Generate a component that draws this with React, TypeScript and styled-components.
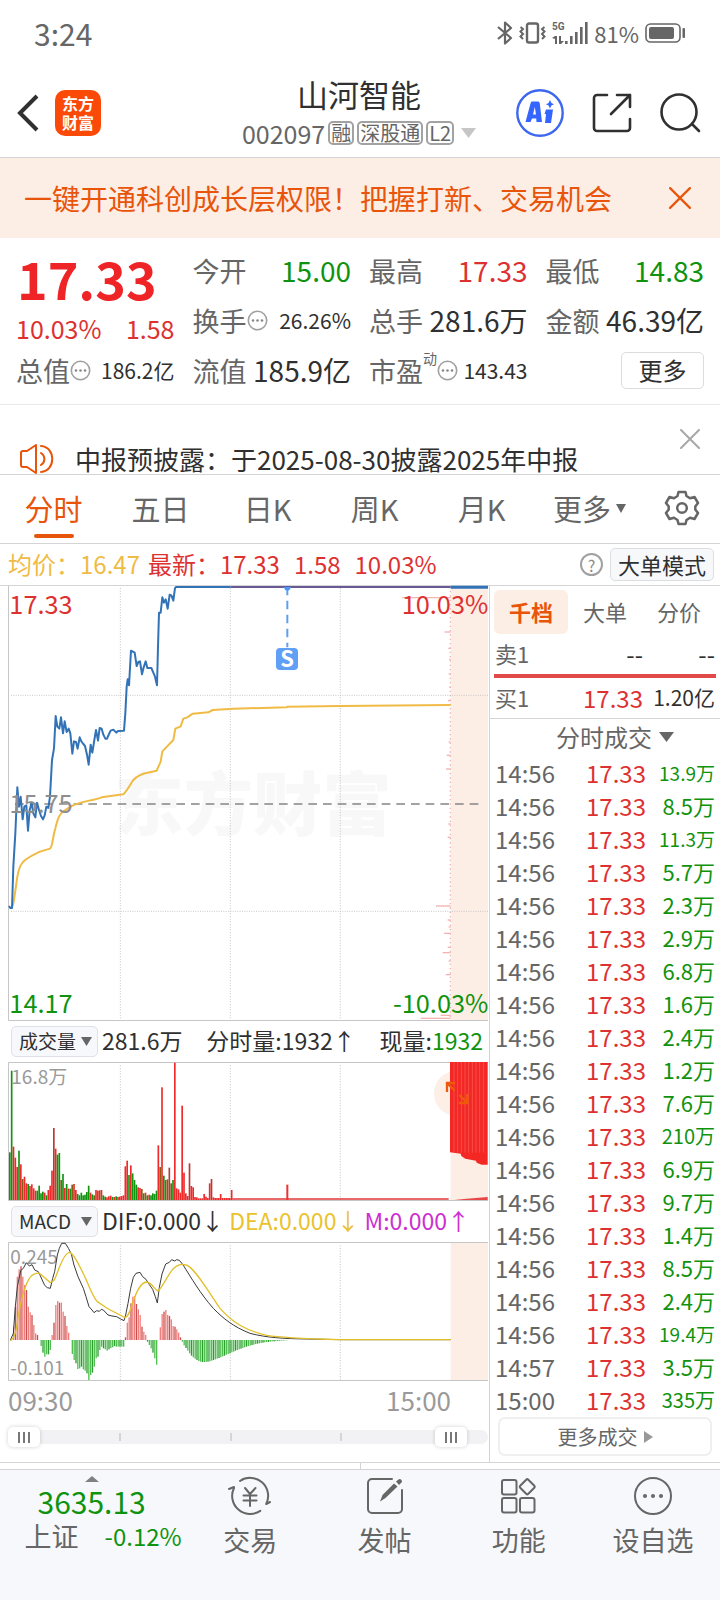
import React, { useState } from "react";
import styled, { createGlobalStyle } from "styled-components";

const c = {
  red: "#dd3131",
  green: "#0f930f",
  orange: "#e8550a",
  peach: "#fcede5",
  text: "#303030",
  sub: "#666666",
  mute: "#9a9a9a",
  line: "#d4d4d6",
  nav: "#f7f8fb",
  blue: "#3273b8",
  gold: "#f0bb45",
};

const Global = createGlobalStyle`
  * { box-sizing: border-box; }
  body { margin: 0; background: #fff; }
  body, button, select, input {
    font-family: "Noto Sans CJK SC", "Noto Sans", sans-serif;
    color: ${c.text};
  }
  button { border: 0; padding: 0; background: none; cursor: pointer; }
  h1, p, dl, dt, dd { margin: 0; font-weight: 400; }
  svg { display: block; flex: none; }
`;

const Page = styled.div`
  display: flex;
  flex-direction: column;
  min-height: 100vh;
  overflow: hidden;
`;

/* ---------- status bar and title ---------- */

const StatusBar = styled.div`
  display: flex;
  align-items: center;
  justify-content: space-between;
  height: 70px;
  padding: 0 34px 4px;
  color: ${c.sub};
  font-size: 30px;
`;

const StatusIcons = styled.div`
  display: flex;
  align-items: center;
  gap: 6px;
  font-size: 22px;
`;

const Header = styled.header`
  display: grid;
  grid-template-columns: 1fr auto 1fr;
  height: 88px;
  padding: 0 19px 0 17px;
  border-bottom: 1px solid ${c.line};
`;

const HeaderSide = styled.div<{ $end?: boolean }>`
  display: flex;
  align-items: center;
  gap: ${(p) => (p.$end ? 28 : 14)}px;
  padding-bottom: 2px;
  justify-content: ${(p) => (p.$end ? "flex-end" : "flex-start")};
`;

const Logo = styled.span`
  display: grid;
  place-content: center;
  width: 46px;
  height: 46px;
  border-radius: 10px;
  background: #fb4a08;
  color: #fff;
  font-size: 16px;
  font-weight: 700;
  line-height: 19px;
`;

const TitleBlock = styled.div`
  display: flex;
  flex-direction: column;
  align-items: center;
`;

const Title = styled.h1`
  font-size: 31px;
  line-height: 48px;
`;

const CodeLine = styled.div`
  display: flex;
  align-items: center;
  gap: 3px;
  color: ${c.sub};
  font-size: 25px;
  line-height: 30px;
  svg {
    margin-left: 4px;
  }
`;

const Tag = styled.span`
  padding: 0 1px;
  border: 2px solid #a2a2a2;
  border-radius: 5px;
  font-size: 20px;
  line-height: 20px;
`;

/* ---------- banner ---------- */

const Banner = styled.div`
  display: flex;
  align-items: center;
  justify-content: space-between;
  height: 80px;
  padding: 0 29px 0 24px;
  background: ${c.peach};
  color: ${c.orange};
  font-size: 28px;
`;

/* ---------- quote ---------- */

const Quote = styled.section`
  display: grid;
  grid-template-columns: repeat(4, minmax(0, 1fr));
  grid-auto-rows: 50px;
  column-gap: 18px;
  padding: 7px 16px 9px;
  border-bottom: 1px solid #e9e9eb;
`;

const PriceCell = styled.div`
  grid-row: span 2;
  color: ${c.red};
`;

const BigPrice = styled.div`
  padding-left: 1px;
  color: #ee2426;
  font-size: 52px;
  font-weight: 700;
  line-height: 66px;
`;

const Change = styled.div`
  display: flex;
  justify-content: space-between;
  font-size: 25px;
  line-height: 34px;
`;

const Stat = styled.dl`
  display: flex;
  align-items: center;
  justify-content: space-between;
  white-space: nowrap;
`;

const StatName = styled.dt`
  display: flex;
  align-items: center;
  color: ${c.sub};
  font-size: 27px;
`;

const Super = styled.sup`
  align-self: flex-start;
  font-size: 14px;
  line-height: 14px;
`;

const StatValue = styled.dd<{ $small?: boolean; $color?: string }>`
  font-size: ${(p) => (p.$small ? 21 : 28)}px;
  color: ${(p) => p.$color || c.text};
`;

const MoreButton = styled.button`
  place-self: center end;
  width: 83px;
  height: 37px;
  border: 1px solid #dcdcde;
  border-radius: 5px;
  font-size: 24px;
  line-height: 34px;
`;

/* ---------- notice ---------- */

const Notice = styled.div`
  display: flex;
  align-items: flex-start;
  justify-content: space-between;
  height: 70px;
  padding: 24px 20px 0;
  overflow: hidden;
  border-bottom: 1px solid ${c.line};
`;

const NoticeText = styled.p`
  display: flex;
  align-items: center;
  gap: 21px;
  padding-top: 12px;
  font-size: 26px;
  line-height: 36px;
`;

/* ---------- period tabs ---------- */

const Tabs = styled.nav`
  display: grid;
  grid-template-columns: repeat(5, 107fr) 109fr 76fr;
  height: 69px;
  border-bottom: 1px solid ${c.line};
`;

const Tab = styled.button<{ $active?: boolean }>`
  position: relative;
  display: flex;
  align-items: center;
  justify-content: center;
  gap: 5px;
  padding-bottom: 2px;
  white-space: nowrap;
  color: ${(p) => (p.$active ? c.orange : c.sub)};
  font-size: 29px;
  &::after {
    content: "";
    position: absolute;
    bottom: 5px;
    width: 40px;
    height: 4px;
    border-radius: 2px;
    background: ${(p) => (p.$active ? c.orange : "transparent")};
  }
`;

const InfoRow = styled.div`
  display: flex;
  align-items: center;
  justify-content: space-between;
  height: 42px;
  padding: 0 6px 0 8px;
  border-bottom: 1px solid ${c.line};
  color: ${c.red};
  font-size: 24px;
`;

const InfoValues = styled.div`
  display: flex;
  gap: 14px;
  padding-bottom: 2px;
`;

const Average = styled.span`
  margin-right: -6px;
  color: ${c.gold};
`;

const InfoActions = styled.div`
  display: flex;
  align-items: center;
  gap: 7px;
`;

const HelpButton = styled.button`
  width: 23px;
  height: 23px;
  border: 2px solid #a0a0a0;
  border-radius: 50%;
  color: #8a8a8a;
  font-size: 16px;
  line-height: 18px;
`;

const ModeButton = styled.button`
  height: 33px;
  padding: 0 7px;
  border: 1px solid #dddee2;
  border-radius: 5px;
  background: #f7f8fa;
  font-size: 22px;
  line-height: 29px;
`;

/* ---------- charts ---------- */

const Main = styled.main`
  display: grid;
  grid-template-columns: minmax(0, 490fr) minmax(0, 230fr);
  border-bottom: 1px solid ${c.line};
`;

const ChartColumn = styled.div`
  padding: 0 1px 0 8px;
  border-right: 1px solid ${c.line};
`;

const ChartSvg = styled.svg`
  width: 100%;
  height: auto;
  overflow: visible;
  font-family: "Noto Sans CJK SC", sans-serif;
`;

const IndicatorRow = styled.div`
  display: flex;
  align-items: center;
  gap: 4px;
  height: 41px;
  padding-left: 3px;
  font-size: 23px;
  white-space: nowrap;
`;

const Readings = styled.div<{ $end: number }>`
  flex: 1;
  display: flex;
  justify-content: space-between;
  padding: 0 ${(p) => p.$end}px 4px 0;
`;

const Picker = styled.label`
  position: relative;
  display: flex;
  align-items: center;
  select {
    appearance: none;
    width: 87px;
    height: 31px;
    padding: 0 0 3px 7px;
    border: 1px solid #e0e1e6;
    border-radius: 5px;
    background: ${c.nav};
    font-size: 19px;
  }
  svg {
    position: absolute;
    right: 6px;
    pointer-events: none;
  }
`;

const Tint = styled.span<{ $color: string }>`
  color: ${(p) => p.$color};
`;

const TimeAxis = styled.div`
  display: flex;
  justify-content: space-between;
  padding: 0 37px 2px 0;
  color: ${c.mute};
  font-size: 26px;
  line-height: 38px;
`;

const RangeBar = styled.div`
  position: relative;
  height: 20px;
  margin: 6px 0 15px;
  &::before {
    content: "";
    position: absolute;
    inset: 3px 0;
    border-radius: 7px;
    background:
      linear-gradient(#d5d5d9, #d5d5d9) 23.3% 50% / 2px 8px no-repeat,
      linear-gradient(#d5d5d9, #d5d5d9) 46.4% 50% / 2px 8px no-repeat,
      linear-gradient(#d5d5d9, #d5d5d9) 69.4% 50% / 2px 8px no-repeat,
      #f2f2f5;
  }
`;

const RangeThumb = styled.input`
  position: absolute;
  inset: 0;
  width: 100%;
  height: 20px;
  margin: 0;
  appearance: none;
  background: none;
  pointer-events: none;
  &::-webkit-slider-thumb {
    appearance: none;
    width: 32px;
    height: 20px;
    border-radius: 5px;
    pointer-events: auto;
    box-shadow: 0 0 4px rgba(0, 0, 0, 0.18);
    background:
      linear-gradient(#777, #777) 10px 50% / 2px 11px no-repeat,
      linear-gradient(#777, #777) 15px 50% / 2px 11px no-repeat,
      linear-gradient(#777, #777) 20px 50% / 2px 11px no-repeat,
      #fff;
  }
`;

/* ---------- order book ---------- */

const Book = styled.aside`
  display: flex;
  flex-direction: column;
  padding-top: 4px;
`;

const BookTabs = styled.div`
  display: grid;
  grid-template-columns: repeat(3, 1fr);
  padding: 0 4px;
`;

const BookTab = styled.button<{ $active?: boolean }>`
  height: 44px;
  padding-bottom: 2px;
  border-radius: 6px;
  background: ${(p) => (p.$active ? c.peach : "none")};
  color: ${(p) => (p.$active ? c.orange : c.sub)};
  font-size: 22px;
  font-weight: ${(p) => (p.$active ? 700 : 400)};
`;

const Level = styled.div`
  display: grid;
  grid-template-columns: 1fr 80px 72px;
  align-items: center;
  height: 40px;
  padding: 0 5px 2px;
  text-align: right;
  font-size: 21px;
`;

const LevelName = styled.span`
  text-align: left;
  color: ${c.sub};
  font-size: 22px;
`;

const LevelPrice = styled.span<{ $color?: string }>`
  color: ${(p) => p.$color || c.text};
  font-size: 24px;
`;

const Balance = styled.div`
  height: 4px;
  margin: 0 4px;
  background: #e24a4a;
`;

const TradesHead = styled.button`
  display: flex;
  align-items: center;
  justify-content: center;
  gap: 7px;
  height: 39px;
  padding: 0 0 3px 20px;
  border-top: 1px solid ${c.line};
  color: ${c.sub};
  font-size: 24px;
`;

const Trades = styled.table`
  width: 100%;
  border-collapse: collapse;
  td {
    height: 33px;
    padding: 0;
    line-height: 31px;
    vertical-align: top;
  }
`;

const TimeCell = styled.td`
  && {
    padding-left: 5px;
  }
  color: ${c.sub};
  font-size: 24px;
`;

const PriceTd = styled.td`
  color: ${c.red};
  font-size: 24px;
  text-align: right;
`;

const VolumeTd = styled.td<{ $size: number }>`
  && {
    padding-right: 5px;
  }
  width: 74px;
  color: ${c.green};
  font-size: ${(p) => p.$size}px;
  text-align: right;
`;

const MoreTrades = styled.button`
  display: flex;
  align-items: center;
  justify-content: center;
  gap: 6px;
  height: 39px;
  margin: 0 8px 6px;
  border: 2px solid #efeff1;
  border-radius: 7px;
  color: ${c.sub};
  font-size: 20px;
`;

/* ---------- bottom bar ---------- */

const Peek = styled.div`
  display: grid;
  grid-template-columns: 1fr 1fr;
  height: 6px;
  span + span {
    border-left: 1px solid ${c.line};
  }
`;

const BottomBar = styled.footer`
  flex: 1;
  display: grid;
  grid-template-columns: 183fr repeat(4, 134fr);
  align-items: start;
  min-height: 131px;
  border-top: 1px solid ${c.line};
  background: ${c.nav};
`;

const IndexButton = styled.button`
  display: flex;
  flex-direction: column;
  align-items: center;
  padding-top: 6px;
  color: ${c.green};
  font-size: 30px;
  line-height: 38px;
`;

const IndexLine = styled.span`
  display: flex;
  align-items: center;
  gap: 26px;
  padding-left: 23px;
  font-size: 24px;
  line-height: 32px;
`;

const IndexName = styled.span`
  color: ${c.sub};
  font-size: 27px;
`;

const NavButton = styled.button`
  display: flex;
  flex-direction: column;
  align-items: center;
  gap: 4px;
  padding-top: 6px;
  color: ${c.sub};
  font-size: 27px;
  line-height: 40px;
`;

/* ---------- small drawings ---------- */

const Triangle = ({ w = 12, h = 10, fill = c.sub }: { w?: number; h?: number; fill?: string }) => (
  <svg width={w} height={h} viewBox="0 0 12 10" preserveAspectRatio="none">
    <path d="M0 0H12L6 10Z" fill={fill} />
  </svg>
);

const Cross = ({ size, color }: { size: number; color: string }) => (
  <svg width={size} height={size} viewBox="0 0 20 20" fill="none" stroke={color} strokeWidth="2" strokeLinecap="round">
    <path d="M1 1 19 19M19 1 1 19" />
  </svg>
);

const Dots = () => (
  <svg width="21" height="21" viewBox="0 0 21 21">
    <circle cx="10.5" cy="10.5" r="9.2" fill="none" stroke="#a0a0a0" strokeWidth="1.6" />
    <circle cx="6" cy="10.5" r="1.3" fill="#888" />
    <circle cx="10.5" cy="10.5" r="1.3" fill="#888" />
    <circle cx="15" cy="10.5" r="1.3" fill="#888" />
  </svg>
);

const Bluetooth = () => (
  <svg width="16" height="24" viewBox="0 0 16 24" fill="none" stroke={c.sub} strokeWidth="2.2" strokeLinejoin="round">
    <path d="M1 6 14 17 8 22.500V1.500L14 7 1 18" />
  </svg>
);

const Vibrate = () => (
  <svg width="27" height="22" viewBox="0 0 27 22" fill="none" stroke={c.sub} strokeWidth="2.4">
    <rect x="8" y="1.500" width="11" height="19" rx="2" />
    <path d="M1.500 5 4 7 1.500 9.500 4 12 1.500 14.500 4 17M25.500 5 23 7 25.500 9.500 23 12 25.500 14.500 23 17" strokeWidth="2" />
  </svg>
);

const Signal = () => (
  <svg width="36" height="24" viewBox="0 0 36 24" fill={c.sub}>
    <text x="0" y="9" fontSize="10" fontWeight="700" fontFamily="Roboto, sans-serif">5G</text>
    <path d="M3 15h2v8H3zM0 17l3-2v3zM7 15h2v8H7zM9 23l3-3H9z" />
    <rect x="13" y="20" width="2.600" height="3" />
    <rect x="18" y="15" width="2.600" height="8" />
    <rect x="23" y="11" width="2.600" height="12" />
    <rect x="28" y="6" width="2.600" height="17" />
    <rect x="33" y="1" width="2.600" height="22" />
  </svg>
);

const Battery = () => (
  <svg width="41" height="20" viewBox="0 0 41 20">
    <rect x="1" y="1" width="34" height="18" rx="4.500" fill="none" stroke={c.sub} strokeWidth="1.600" />
    <rect x="4" y="4" width="25" height="12" rx="2" fill={c.sub} />
    <rect x="37.500" y="5" width="2.500" height="10" rx="1" fill={c.sub} />
  </svg>
);

const AiIcon = () => (
  <svg width="48" height="48" viewBox="0 0 48 48">
    <circle cx="24" cy="24" r="22.700" fill="none" stroke="#3d67ee" strokeWidth="2.400" />
    <path d="M16 12.500H22Q23.500 12.500 23.700 14L26 33H20.500L20.200 29.500H16L14.500 33H9.500L14.500 14.500Q15 12.500 16 12.500ZM18.800 18 17 25.500H20Z" fill="#3466ff" fillRule="evenodd" />
    <path d="M30 20.500H37L35 34H29L30 25H28.500ZM34 11l1.400 3L38 15.200 35.400 16.500 34 19.500 32.600 16.500 30 15.200 32.600 14z" fill="#3466ff" />
  </svg>
);

const Share = () => (
  <svg width="40" height="40" viewBox="0 0 40 40" fill="none" stroke="#303030" strokeWidth="2.600" strokeLinecap="round" strokeLinejoin="round">
    <path d="M15 2H5a3 3 0 0 0-3 3V35a3 3 0 0 0 3 3H35a3 3 0 0 0 3-3V26M25 2H38V14M38 2 19 21" />
  </svg>
);

const Search = () => (
  <svg width="41" height="40" viewBox="0 0 41 40" fill="none" stroke="#303030" strokeWidth="2.600" strokeLinecap="round">
    <circle cx="19" cy="19" r="17.500" />
    <path d="M32 31 39 38" />
  </svg>
);

const Speaker = () => (
  <svg width="34" height="30" viewBox="0 0 34 30" fill="none" stroke={c.orange} strokeWidth="2" strokeLinejoin="round" strokeLinecap="round">
    <path d="M16 1 7 7H3a2 2 0 0 0-2 2V21a2 2 0 0 0 2 2H7L16 29ZM21 9a7 7 0 0 1 0 12M21 2c15 1 15 25 0 26" />
  </svg>
);

const Gear = () => (
  <svg width="36" height="36" viewBox="0 0 36 36" fill="none" stroke={c.sub} strokeWidth="2.500" strokeLinejoin="round">
    <path d="M14.500 2H21.500L22.500 6 26 8.300 30.500 7 34 13 31.300 16.500V19.500L34 23 30.500 29 26 27.700 22.500 30 21.500 34H14.500L13.500 30 10 27.700 5.500 29 2 23 4.700 19.500V16.500L2 13 5.500 7 10 8.300 13.500 6Z" />
    <circle cx="18" cy="18" r="4.800" />
  </svg>
);

const navIconProps = { height: 40, viewBox: "0 0 44 40", width: 44, fill: "none", stroke: c.sub, strokeWidth: 2, strokeLinecap: "round" as const, strokeLinejoin: "round" as const };

const navItems = [
  {
    name: "交易",
    icon: (
      <svg {...navIconProps}>
        <path d="M12 5A18 18 0 0 1 38.200 28L42 26M32.300 34.800A18 18 0 0 1 6 12M1 13 6 11" />
        <path d="M17 12 22 18 27.500 12M15.500 19.500H28.500M15.500 24.500H28.500M22 18V30" />
      </svg>
    ),
  },
  {
    name: "发帖",
    icon: (
      <svg {...navIconProps}>
        <path d="M29 3H9a4 4 0 0 0-4 4V33a4 4 0 0 0 4 4H35a4 4 0 0 0 4-4V14" />
        <path d="M17 25.500 19.500 19 31 7.500 34.500 10.500 22.500 22Z" fill={c.sub} stroke="none" />
        <path d="M33 5.500 35.500 3.500Q37 2.500 38.500 4 39.500 5.500 38.500 6.500L36 9Z" fill={c.sub} stroke="none" />
      </svg>
    ),
  },
  {
    name: "功能",
    icon: (
      <svg {...navIconProps}>
        <rect x="5" y="4" width="14.500" height="14.500" rx="2" />
        <rect x="5" y="22" width="14.500" height="14.500" rx="2" />
        <rect x="23" y="22" width="14.500" height="14.500" rx="2" />
        <rect x="24.500" y="5" width="11.500" height="11.500" rx="1.500" transform="rotate(45 30.250 10.750)" />
      </svg>
    ),
  },
  {
    name: "设自选",
    icon: (
      <svg {...navIconProps}>
        <circle cx="22" cy="20" r="18" />
        <g fill={c.sub} stroke="none">
          <circle cx="14" cy="20" r="2" />
          <circle cx="22" cy="20" r="2" />
          <circle cx="30" cy="20" r="2" />
        </g>
      </svg>
    ),
  },
];

/* ---------- chart data: three drawing units to a pixel ---------- */

const gridX = [361, 691, 1021];
const STEP = 5.5;
const FIRST = 30;

const GridLines = ({ top, bottom }: { top: number; bottom: number }) => (
  <g stroke="#c2c2c2" strokeWidth="3" strokeDasharray="3 5">
    {gridX.map((x) => (
      <path key={x} d={`M${x} ${top}V${bottom}`} />
    ))}
  </g>
);

const priceLine =
  "27,978 31,984 36,984 40,860 46,760 52,622 57,680 62,650 68,718 73,680 79,676 84,752 89,690 95,668 100,700 106,712 111,668 117,690 123,708 129,718 134,706 139,680 145,684 150,650 156,540 162,505 167,408 172,440 178,446 183,412 189,460 194,424 200,456 206,446 211,460 217,521 222,484 228,486 233,506 239,472 244,484 250,492 255,498 261,524 266,554 272,494 277,518 283,480 288,450 294,482 299,444 305,446 310,464 316,476 321,476 327,462 332,452 340,449 349,458 354,453 372,452 376,400 380,320 383,298 387,316 393,212 404,218 410,258 415,246 420,244 426,283 431,262 437,244 442,264 454,264 460,278 465,290 471,316 474,200 477,98 482,98 487,52 492,68 497,58 503,86 509,44 514,46 520,62 525,24 530,21";

const averageLine =
  "M38 978 42 960 52 890C58 860 62 852 75 840 95 826 105 822 120 815L150 806C158 800 158 770 166 745 174 712 178 704 190 694L212 680C235 665 280 662 305 652L370 643C380 634 390 615 400 600 415 584 430 580 442 578L470 572 482 545 487 514 520 480 526 446 542 439 550 416 562 412 578 401 625 397 638 390 700 386 860 382 862 380 1020 378 1352 375";

const sideTicks: [number, number][] = [
  [53, 145], [156, 18], [205, 7], [238, 5], [282, 6], [322, 4], [362, 8], [486, 6], [526, 12], [567, 14], [732, 7], [772, 9],
  [978, 44], [1020, 9], [1041, 6], [1060, 20], [1102, 9], [1118, 24], [1143, 6], [1184, 15], [1306, 30], [1315, 90],
];

/* the letter after each height: r rising, g falling, d and m mixed minutes */
const volumeData =
  "143g 388g 160r 127r 99r 148g 107r 63d 70r 50r 48g 42r 47r 35r 28r 28g 43g 20g 25g 22r 14g 30r 43r 88r 216m 154r 136g 141g 60d 78g 36r 48g 34r 34g 46d 48r 30r 18g 14g 22g 14g 16g 24g 43g 22r 17g 14d 30r 28r 29d 30r 14g 10g 8r 11r 13r 9g 9r 11g 9r 10r 12r 14r 101r 118r 75g 104r 80g 60g 46g 38r 36r 33d 20g 22r 14g 16r 14g 20g 18g 28g 164r 99d 338r 73g 60d 62d 97m 50d 60g 412r 35r 32r 22r 283r 82r 20r 12r 110m 42r 38r 9r 8r 5r 5r 5r 18r 10r 6r 50r 63m 8r 6r 6r 6r 18r 6r 6r 6r 6r 6r 30r".split(" ");
const volumeColors: Record<string, string> = { r: "#ee2a2a", g: "#109410", d: "#8a5a18", m: "#b83a36" };

const macdHead =
  "0 0 40 100 190 212 221 190 165 150 100 83 75 45 20 15 0 -18 -38 -50 -43 -43 -30 15 52 105 117 112 112 85 72 42 22 0 -42 -60 -70 -87 -85 -80 -88 -92 -100 -120 -105 -98 -80 -55 -50 -30 -20 -25 -28 -32 -28 -24 -22 -18 -20 -20 -20 -20 -20 8 52 68 110 130 132 108 92 75 40 25 15 -5 -15 -25 -38 -55 -74 0 38 78 85 90 75 72 62 42 40 32 22 8 -5 -16 -24 -32 -40 -47 -52 -56 -60 -63 -65 -66 -66 -66 -65 -64 -62 -60 -58 -56 -54 -52 -49 -47 -44 -42 -40 -37 -35 -32 -30 -28 -26 -24 -22 -20 -18 -17 -15 -14 -12 -11 -10 -9 -8 -7 -6 -6 -5 -4 -4 -3 -3 -2 -2 -2 -1 -1"
    .split(" ")
    .map(Number);

const PriceChart = () => (
  <ChartSvg viewBox="24 18 1440 1305" role="img" aria-label="分时走势">
    <g fill="#f8f8f8" fontSize="208" fontWeight="900">
      <text x="343" y="750">东方财富</text>
    </g>
    <rect x="1352" y="18" width="112" height="1303" fill={c.peach} />
    <path d="M25.500 18V1321.500H1464" fill="none" stroke="#c6c6c8" strokeWidth="3" />
    <GridLines top={24} bottom={1318} />
    <path d="M33 346H1464M33 994H1464" stroke="#c8c8c8" strokeWidth="3" strokeDasharray="3 4" />
    <g stroke="#f2b3b1" strokeWidth="4">
      {sideTicks.map(([y, w]) => (
        <path key={y} d={`M${1352 - w} ${y}H1352`} />
      ))}
      <path d="M1351 20V1318" strokeDasharray="4 9" />
    </g>
    <g fontSize="76">
      <text x="28" y="101" fill={c.red}>17.33</text>
      <text x="1465" y="101" fill={c.red} textAnchor="end">10.03%</text>
      <text x="28" y="1298" fill={c.green}>14.17</text>
      <text x="1465" y="1298" fill={c.green} textAnchor="end">-10.03%</text>
    </g>
    <path d="M45 672H1440" stroke="#858585" strokeWidth="5" strokeDasharray="26 18" />
    <path d={averageLine} fill="none" stroke={c.gold} strokeWidth="6" strokeLinejoin="round" />
    <polyline points={priceLine} fill="none" stroke={c.blue} strokeWidth="6" strokeLinejoin="round" />
    <text x="28" y="698" fill="#8e8e8e" fontSize="76">15.75</text>
    <path d="M526 21H692" stroke={c.blue} strokeWidth="6" />
    <path d="M692 21H1352" stroke="#6a5a94" strokeWidth="6" />
    <path d="M1352 22H1464" stroke={c.blue} strokeWidth="9" />
    <path d="M850 21H874L868 30 862 34 856 30Z" fill="#4c94f7" />
    <path d="M862 32V202" stroke="#5f9ff0" strokeWidth="6" strokeDasharray="26 16" strokeDashoffset="12" />
    <rect x="828" y="204" width="66" height="66" rx="12" fill="#5f9ff5" />
    <text x="861" y="261" fill="#fff" fontSize="66" fontWeight="700" textAnchor="middle">S</text>
  </ChartSvg>
);

const VolumeChart = () => (
  <ChartSvg viewBox="24 156 1440 417" role="img" aria-label="成交量">
    <GridLines top={166} bottom={570} />
    <rect x="1352" y="158" width="112" height="412" fill={c.peach} />
    <path d="M1464 157.500H25.500V571.500H1464" fill="none" stroke="#c6c6c8" strokeWidth="3" />
    <text x="34" y="222" fill={c.mute} fontSize="57">16.8万</text>
    {volumeData.map((item, i) => {
      const h = parseInt(item, 10);
      return <rect key={i} x={FIRST + i * STEP - 3} y={570 - h} width="5" height={h} fill={volumeColors[item.slice(-1)]} />;
    })}
    <path d="M697 567H1346" stroke="#e03434" strokeWidth="5" />
    <rect x="859" y="524" width="6" height="46" fill="#ee3030" />
    <circle cx="1370" cy="250" r="68" fill="#fdeee6" />
    <path d="M1350 156H1463V464H1445L1430 458 1428 452 1396 446 1384 438 1382 431 1350 427Z" fill="#f32724" />
    <g stroke="#f8625a" strokeWidth="2">
      {[1362, 1373, 1384, 1395, 1406, 1417, 1428, 1439, 1450].map((x) => (
        <path key={x} d={`M${x} 156V428`} />
      ))}
    </g>
    <path d="M1362 570 1400 566 1463 561V570Z" fill="#e84545" />
    <g fill="none" stroke="#ee5a0c" strokeWidth="7">
      <path d="M1341 246V219H1366M1342 220 1364 242M1402 252V279H1376M1401 278 1378 255" />
    </g>
  </ChartSvg>
);

const MacdChart = () => (
  <ChartSvg viewBox="24 126 1440 417" role="img" aria-label="MACD">
    <rect x="1352" y="128" width="112" height="413" fill={c.peach} />
    <GridLines top={136} bottom={540} />
    <path d="M1464 127.500H25.500V541.500H1464" fill="none" stroke="#c6c6c8" strokeWidth="3" />
    <g fill={c.mute} fontSize="57">
      <text x="31" y="192">0.245</text>
      <text x="31" y="524">-0.101</text>
    </g>
    {macdHead.map((v, i) => (
      <rect
        key={i}
        x={FIRST + i * STEP - 2}
        y={v > 0 ? 420 - v : 420}
        width="4"
        height={Math.abs(v)}
        fill={v > 0 ? (i % 3 ? "#f07f7d" : "#c6514f") : i % 3 ? "#4fc050" : "#2f9b32"}
      />
    ))}
    <path
      d="M31 421 40 400 46 320 52 260 62 212 70 205 79 188 88 198 96 194 104 210 115 215 124 234 134 256 142 263 151 265 158 235 164 215 172 165 178 145 185 130 196 130 206 146 214 162 222 195 234 230 250 265 258 290 267 320 276 330 282 338 290 332 298 334 304 328 310 330 324 345 336 348 350 350 362 357 372 362 377 345 384 310 392 265 400 232 408 220 420 217 428 230 438 238 448 254 458 268 466 290 472 309 478 262 486 222 497 192 508 187 515 179 524 183 530 179 538 181 548 193C575 235 600 280 640 325 670 356 700 380 750 400 800 413 850 416 920 417L1021 419H1352"
      fill="none"
      stroke="#3a3a3a"
      strokeWidth="3"
      strokeLinejoin="round"
    />
    <path
      d="M31 422C50 412 50 370 58 330 68 280 80 240 96 226 112 216 118 218 128 228L150 247C160 250 166 235 175 210 190 170 200 156 210 157 225 165 235 192 252 225 270 262 275 285 292 305L325 327 375 353C388 350 392 322 404 292 418 255 430 246 440 246 458 250 464 270 474 273 488 262 500 230 518 208 535 192 545 191 562 196 590 212 625 275 660 325 700 370 740 392 800 406 850 414 920 416 1021 419H1352"
      fill="none"
      stroke="#e2c02c"
      strokeWidth="4"
    />
  </ChartSvg>
);

/* ---------- trades ---------- */

const volumes = ["13.9万", "8.5万", "11.3万", "5.7万", "2.3万", "2.9万", "6.8万", "1.6万", "2.4万", "1.2万", "7.6万", "210万", "6.9万", "9.7万", "1.4万", "8.5万", "2.4万", "19.4万", "3.5万", "335万"];
const tradeTime = (i: number) => (i < 18 ? "14:56" : i === 18 ? "14:57" : "15:00");
const volumeSize = (v: string) => (v.length === 5 ? 19 : v.includes(".") ? 22 : 20);

export default function App() {
  const [tab, setTab] = useState("分时");
  const [bookTab, setBookTab] = useState("千档");

  return (
    <Page>
      <Global />
      <StatusBar>
        <span>3:24</span>
        <StatusIcons>
          <Bluetooth />
          <Vibrate />
          <Signal />
          <span>81%</span>
          <Battery />
        </StatusIcons>
      </StatusBar>

      <Header>
        <HeaderSide>
          <button aria-label="返回">
            <svg width="24" height="38" viewBox="0 0 24 38" fill="none" stroke="#303030" strokeWidth="4">
              <path d="M20 2 3 19 20 36" />
            </svg>
          </button>
          <Logo>
            <span>东方</span>
            <span>财富</span>
          </Logo>
        </HeaderSide>
        <TitleBlock>
          <Title>山河智能</Title>
          <CodeLine>
            <span>002097</span>
            <Tag>融</Tag>
            <Tag>深股通</Tag>
            <Tag>L2</Tag>
            <Triangle w={15} h={10} fill="#c6c6c6" />
          </CodeLine>
        </TitleBlock>
        <HeaderSide $end>
          <button aria-label="AI"><AiIcon /></button>
          <button aria-label="分享"><Share /></button>
          <button aria-label="搜索"><Search /></button>
        </HeaderSide>
      </Header>

      <Banner>
        <span>一键开通科创成长层权限！把握打新、交易机会</span>
        <button aria-label="关闭横幅"><Cross size={22} color={c.orange} /></button>
      </Banner>

      <Quote>
        <PriceCell>
          <BigPrice>17.33</BigPrice>
          <Change>
            <span>10.03%</span>
            <span>1.58</span>
          </Change>
        </PriceCell>
        <Stat><StatName>今开</StatName><StatValue $color={c.green}>15.00</StatValue></Stat>
        <Stat><StatName>最高</StatName><StatValue $color={c.red}>17.33</StatValue></Stat>
        <Stat><StatName>最低</StatName><StatValue $color={c.green}>14.83</StatValue></Stat>
        <Stat><StatName>换手<Dots /></StatName><StatValue $small>26.26%</StatValue></Stat>
        <Stat><StatName>总手</StatName><StatValue>281.6万</StatValue></Stat>
        <Stat><StatName>金额</StatName><StatValue>46.39亿</StatValue></Stat>
        <Stat><StatName>总值<Dots /></StatName><StatValue $small>186.2亿</StatValue></Stat>
        <Stat><StatName>流值</StatName><StatValue>185.9亿</StatValue></Stat>
        <Stat><StatName>市盈<Super>动</Super><Dots /></StatName><StatValue $small>143.43</StatValue></Stat>
        <MoreButton>更多</MoreButton>
      </Quote>

      <Notice>
        <NoticeText>
          <Speaker />
          中报预披露：于2025-08-30披露2025年中报
        </NoticeText>
        <button aria-label="关闭公告"><Cross size={20} color="#a8a8a8" /></button>
      </Notice>

      <Tabs>
        {["分时", "五日", "日K", "周K", "月K", "更多"].map((name) => (
          <Tab key={name} $active={tab === name} onClick={() => setTab(name)}>
            {name}
            {name === "更多" && <Triangle w={10} h={9} />}
          </Tab>
        ))}
        <Tab aria-label="设置"><Gear /></Tab>
      </Tabs>

      <InfoRow>
        <InfoValues>
          <Average>均价：16.47</Average>
          <span>最新：17.33</span>
          <span>1.58</span>
          <span>10.03%</span>
        </InfoValues>
        <InfoActions>
          <HelpButton aria-label="帮助">?</HelpButton>
          <ModeButton>大单模式</ModeButton>
        </InfoActions>
      </InfoRow>

      <Main>
        <ChartColumn>
          <PriceChart />
          <IndicatorRow>
            <Picker>
              <select aria-label="副图一"><option>成交量</option></select>
              <Triangle w={11} h={9} />
            </Picker>
            <Readings $end={5}>
              <span>281.6万</span>
              <span>分时量:1932↑</span>
              <span>现量:<Tint $color={c.green}>1932</Tint></span>
            </Readings>
          </IndicatorRow>
          <VolumeChart />
          <IndicatorRow>
            <Picker>
              <select aria-label="副图二"><option>MACD</option></select>
              <Triangle w={11} h={9} />
            </Picker>
            <Readings $end={18}>
              <span>DIF:0.000↓</span>
              <Tint $color="#ebc22d">DEA:0.000↓</Tint>
              <Tint $color="#cc2fd0">M:0.000↑</Tint>
            </Readings>
          </IndicatorRow>
          <MacdChart />
          <TimeAxis>
            <span>09:30</span>
            <span>15:00</span>
          </TimeAxis>
          <RangeBar>
            <RangeThumb type="range" aria-label="开始时间" min="0" max="1000" defaultValue="0" />
            <RangeThumb type="range" aria-label="结束时间" min="0" max="1000" defaultValue="953" />
          </RangeBar>
        </ChartColumn>

        <Book>
          <BookTabs>
            {["千档", "大单", "分价"].map((name) => (
              <BookTab key={name} $active={bookTab === name} onClick={() => setBookTab(name)}>{name}</BookTab>
            ))}
          </BookTabs>
          <Level>
            <LevelName>卖1</LevelName>
            <LevelPrice>--</LevelPrice>
            <LevelPrice>--</LevelPrice>
          </Level>
          <Balance />
          <Level>
            <LevelName>买1</LevelName>
            <LevelPrice $color={c.red}>17.33</LevelPrice>
            <span>1.20亿</span>
          </Level>
          <TradesHead>分时成交<Triangle w={15} h={10} /></TradesHead>
          <Trades>
            <tbody>
              {volumes.map((v, i) => (
                <tr key={i}>
                  <TimeCell>{tradeTime(i)}</TimeCell>
                  <PriceTd>17.33</PriceTd>
                  <VolumeTd $size={volumeSize(v)}>{v}</VolumeTd>
                </tr>
              ))}
            </tbody>
          </Trades>
          <MoreTrades>
            更多成交
            <svg width="9" height="12" viewBox="0 0 9 12"><path d="M0 0 9 6 0 12Z" fill="#999" /></svg>
          </MoreTrades>
        </Book>
      </Main>
      <Peek><span /><span /></Peek>

      <BottomBar>
        <IndexButton>
          <svg width="14" height="6" viewBox="0 0 14 6"><path d="M0 6 7 0 14 6Z" fill="#808080" /></svg>
          <span>3635.13</span>
          <IndexLine>
            <IndexName>上证</IndexName>
            <span>-0.12%</span>
          </IndexLine>
        </IndexButton>
        {navItems.map((item) => (
          <NavButton key={item.name}>
            {item.icon}
            {item.name}
          </NavButton>
        ))}
      </BottomBar>
    </Page>
  );
}
